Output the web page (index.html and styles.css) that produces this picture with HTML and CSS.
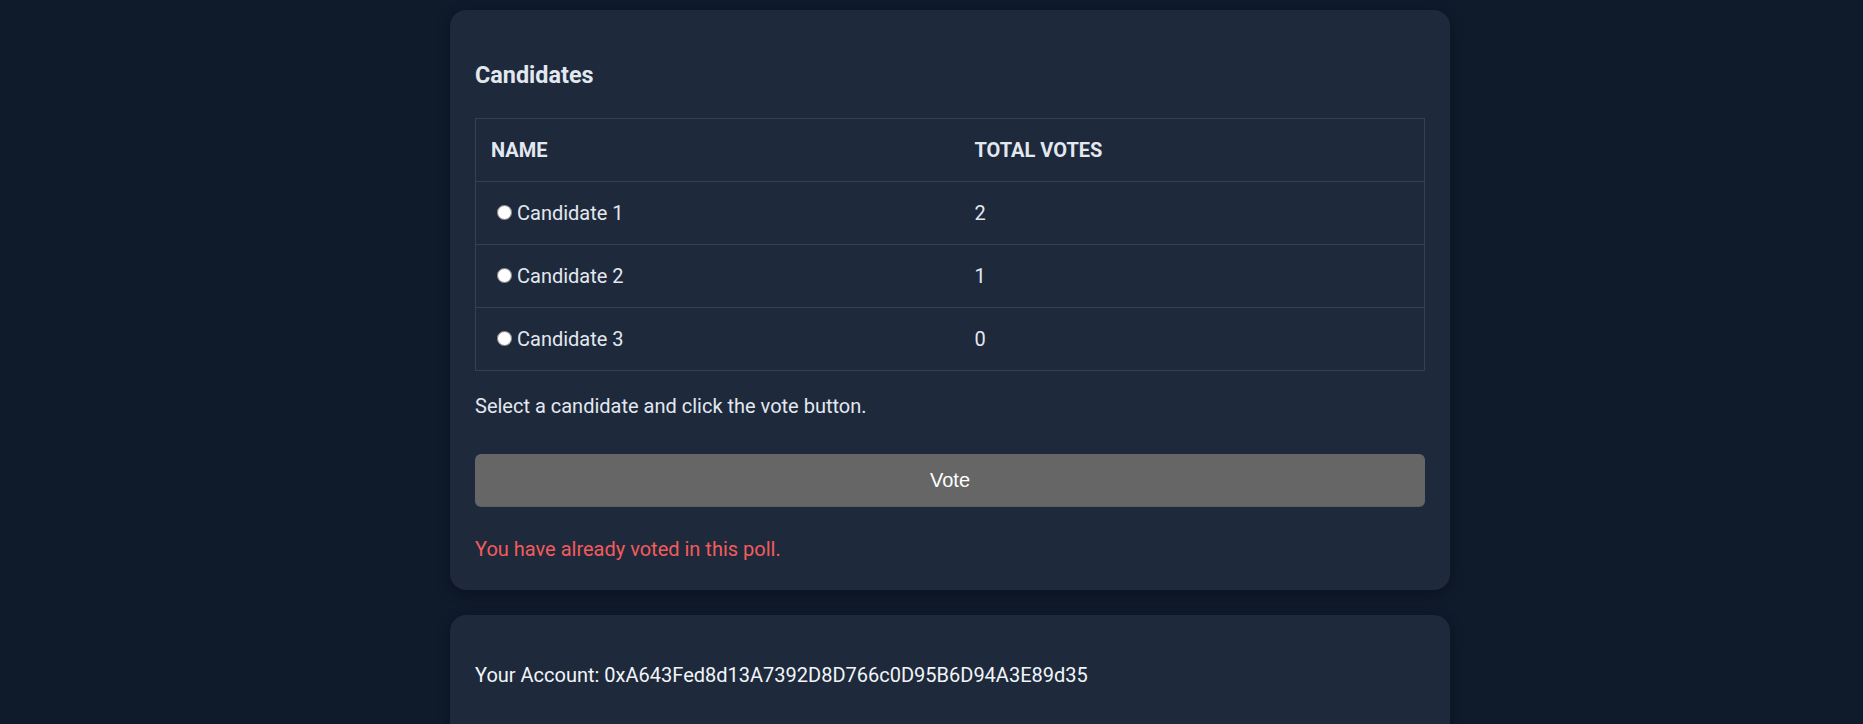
FILE: index.html
```html
<!DOCTYPE html>
<html>
  <head>
    <title>Voting DApp</title>
    <link rel="stylesheet" href="styles.css">
  </head>
  <body>
    <div class="container">
      <div class="card">
        <h3>Candidates</h3>
        <table class="candidates">
          <colgroup>
            <col class="name-col" />
            <col />
          </colgroup>
          <thead>
            <tr>
              <th>NAME</th>
              <th>TOTAL VOTES</th>
            </tr>
          </thead>
          <tbody>
            <tr>
              <td><input type="radio" name="candidate" value="1" />Candidate 1</td>
              <td>2</td>
            </tr>
            <tr>
              <td><input type="radio" name="candidate" value="2" />Candidate 2</td>
              <td>1</td>
            </tr>
            <tr>
              <td><input type="radio" name="candidate" value="3" />Candidate 3</td>
              <td>0</td>
            </tr>
          </tbody>
        </table>

        <p class="hint">Select a candidate and click the vote button.</p>

        <button class="vote-btn" disabled>Vote</button>

        <p class="error">You have already voted in this poll.</p>
      </div>

      <div class="card">
        <p class="account">Your Account: 0xA643Fed8d13A7392D8D766c0D95B6D94A3E89d35</p>
      </div>
    </div>
  </body>
</html>
```

FILE: styles.css
```css
/* Styles for the voting page */
body {
  font-family: Roboto, "Noto Sans", Arial, sans-serif;
  background-color: #0f1a2b;
  color: #e2e8f0;
  margin: 0;
  padding: 0 0 0 37px;
}

.container {
  width: 1000px;
  margin: 10px auto 0;
}

.card {
  background-color: #1e293b;
  border-radius: 16px;
  padding: 25px;
  margin-bottom: 25px;
  box-shadow: 0 4px 14px rgba(0, 0, 0, 0.3);
}

h3 {
  font-size: 23.4px;
  font-weight: bold;
  margin: 26px 0 29px;
  color: #e2e8f0;
}

.candidates {
  width: 100%;
  border-collapse: collapse;
  border: 1px solid #334155;
  font-size: 20px;
}

.name-col {
  width: 484px;
}

.candidates th,
.candidates td {
  text-align: left;
  padding: 19px 15px;
  border-bottom: 1px solid #334155;
}

.candidates th {
  font-weight: bold;
}

.candidates input[type="radio"] {
  width: 15px;
  height: 15px;
  margin: 0 5px 2px 6px;
}

.hint {
  font-size: 20px;
  margin: 23px 0 0;
}

.vote-btn {
  display: block;
  width: 100%;
  margin-top: 36px;
  padding: 14.5px;
  font-family: "Liberation Sans", Arial, sans-serif;
  font-size: 20px;
  color: #fff;
  background-color: #666;
  border: none;
  border-bottom: 1px solid #5a5f66;
  border-radius: 6px;
}

.error {
  color: #f25c5c;
  font-size: 20px;
  margin: 30px 0 4px;
}

.account {
  color: #f1f5f9;
  font-size: 20px;
  margin: 23px 0 60px;
}
```
